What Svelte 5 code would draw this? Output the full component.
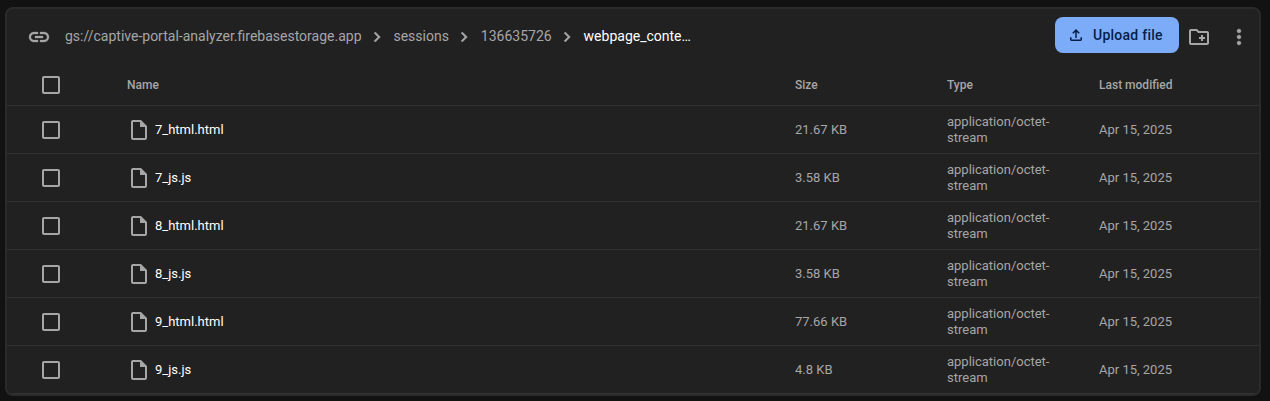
<script>
  const crumbs = ['gs://captive-portal-analyzer.firebasestorage.app', 'sessions', '136635726', 'webpage_conte…'];
  const files = [
    { name: '7_html.html', size: '21.67 KB' },
    { name: '7_js.js', size: '3.58 KB' },
    { name: '8_html.html', size: '21.67 KB' },
    { name: '8_js.js', size: '3.58 KB' },
    { name: '9_html.html', size: '77.66 KB' },
    { name: '9_js.js', size: '4.8 KB' }
  ];
</script>

<main class="card">
  <header class="toolbar">
    <svg class="icon bold" viewBox="0 0 24 24"><path d="M3.9 12c0-1.71 1.39-3.1 3.1-3.1h4V7H7c-2.76 0-5 2.24-5 5s2.24 5 5 5h4v-1.9H7c-1.71 0-3.1-1.39-3.1-3.1zM8 13h8v-2H8v2zm9-6h-4v1.9h4c1.71 0 3.1 1.39 3.1 3.1s-1.39 3.1-3.1 3.1h-4V17h4c2.76 0 5-2.24 5-5s-2.24-5-5-5z" /></svg>
    <nav class="crumbs">
      {#each crumbs as crumb, i}
        {#if i > 0}
          <svg class="chevron bold" viewBox="0 0 24 24"><path d="M10 6 8.59 7.41 13.17 12l-4.58 4.59L10 18l6-6z" /></svg>
        {/if}
        <span class="crumb" class:current={i === crumbs.length - 1}>{crumb}</span>
      {/each}
    </nav>
    <button class="upload">
      <svg viewBox="0 0 24 24"><path d="M11 16V7.85l-2.6 2.6L7 9l5-5 5 5-1.4 1.45-2.6-2.6V16h-2zm-5 4c-.55 0-1.02-.2-1.41-.59A1.93 1.93 0 0 1 4 18v-3h2v3h12v-3h2v3c0 .55-.2 1.02-.59 1.41-.39.39-.86.59-1.41.59H6z" /></svg>
      <span>Upload file</span>
    </button>
    <svg class="icon folder" viewBox="0 0 24 24"><path d="M20 6h-8l-2-2H4c-1.11 0-1.99.89-1.99 2L2 18c0 1.11.89 2 2 2h16c1.11 0 2-.89 2-2V8c0-1.11-.89-2-2-2zm0 12H4V6h5.17l2 2H20v10zm-8-4h2v2h2v-2h2v-2h-2v-2h-2v2h-2v2z" /></svg>
    <svg class="icon bold more" viewBox="0 0 24 24"><path d="M12 8c1.1 0 2-.9 2-2s-.9-2-2-2-2 .9-2 2 .9 2 2 2zm0 2c-1.1 0-2 .9-2 2s.9 2 2 2 2-.9 2-2-.9-2-2-2zm0 6c-1.1 0-2 .9-2 2s.9 2 2 2 2-.9 2-2-.9-2-2-2z" /></svg>
  </header>

  <div class="row head">
    <span class="check"></span>
    <span>Name</span>
    <span>Size</span>
    <span>Type</span>
    <span>Last modified</span>
  </div>
  {#each files as file}
    <div class="row">
      <span class="check"></span>
      <span class="name">
        <svg class="icon" viewBox="0 0 24 24"><path d="M14 2H6c-1.1 0-2 .9-2 2v16c0 1.1.9 2 2 2h12c1.1 0 2-.9 2-2V8l-6-6zM6 20V4h7v5h5v11H6z" /></svg>
        <span>{file.name}</span>
      </span>
      <span>{file.size}</span>
      <span class="type">application/octet-stream</span>
      <span>Apr 15, 2025</span>
    </div>
  {/each}
</main>

<style>
  :global(body) {
    background: #121212;
    font-family: Roboto, sans-serif;
  }
  .card {
    box-sizing: border-box;
    width: 1256px;
    height: 389px;
    margin: 7px 0 0 5px;
    border: 2px solid #2b2b2b;
    border-radius: 8px;
    background: #212121;
    color: #a6a6a6;
    overflow: hidden;
  }
  :global(#app) {
    display: flow-root;
  }
  svg {
    display: block;
    flex: none;
    fill: currentColor;
  }
  .icon {
    width: 24px;
    height: 24px;
  }
  .bold {
    stroke: currentColor;
    stroke-width: 0.3;
  }
  .toolbar {
    display: flex;
    align-items: center;
    height: 56px;
    padding: 0 8px 0 20px;
  }
  .crumbs {
    display: flex;
    align-items: center;
    flex: 1;
    margin-left: 14px;
    font-size: 14px;
    line-height: 20px;
  }
  .crumb {
    position: relative;
    top: -1px;
    white-space: nowrap;
  }
  .current {
    color: #fff;
  }
  .chevron {
    width: 20px;
    height: 20px;
    margin: 0 6.6px 0 5.35px;
    stroke-width: 0.6;
  }
  .upload {
    display: flex;
    align-items: center;
    gap: 8px;
    box-sizing: border-box;
    width: 124px;
    height: 36px;
    margin: 0 8px 4px 0;
    padding: 0 0 0 12px;
    border: 0;
    border-radius: 8px;
    background: #7cacf8;
    color: #041e49;
    font: 500 14px/20px Roboto, sans-serif;
    letter-spacing: 0.25px;
    white-space: nowrap;
  }
  .upload svg {
    width: 18px;
    height: 18px;
  }
  .more {
    margin-left: 16px;
  }
  .row {
    display: grid;
    grid-template-columns: 85px 668px 152px 152px 1fr;
    align-items: center;
    box-sizing: border-box;
    height: 48px;
    padding-left: 35px;
    border-bottom: 1px solid #333;
    font-size: 13px;
    line-height: 16px;
  }
  .head {
    height: 41px;
    font-size: 12px;
    font-weight: 500;
  }
  .check {
    box-sizing: border-box;
    width: 18px;
    height: 18px;
    border: 2px solid #a6a6a6;
    border-radius: 2px;
  }
  .name {
    display: flex;
    align-items: center;
    gap: 4px;
  }
  .name span {
    color: #fff;
  }
  .type {
    width: 120px;
  }
</style>
